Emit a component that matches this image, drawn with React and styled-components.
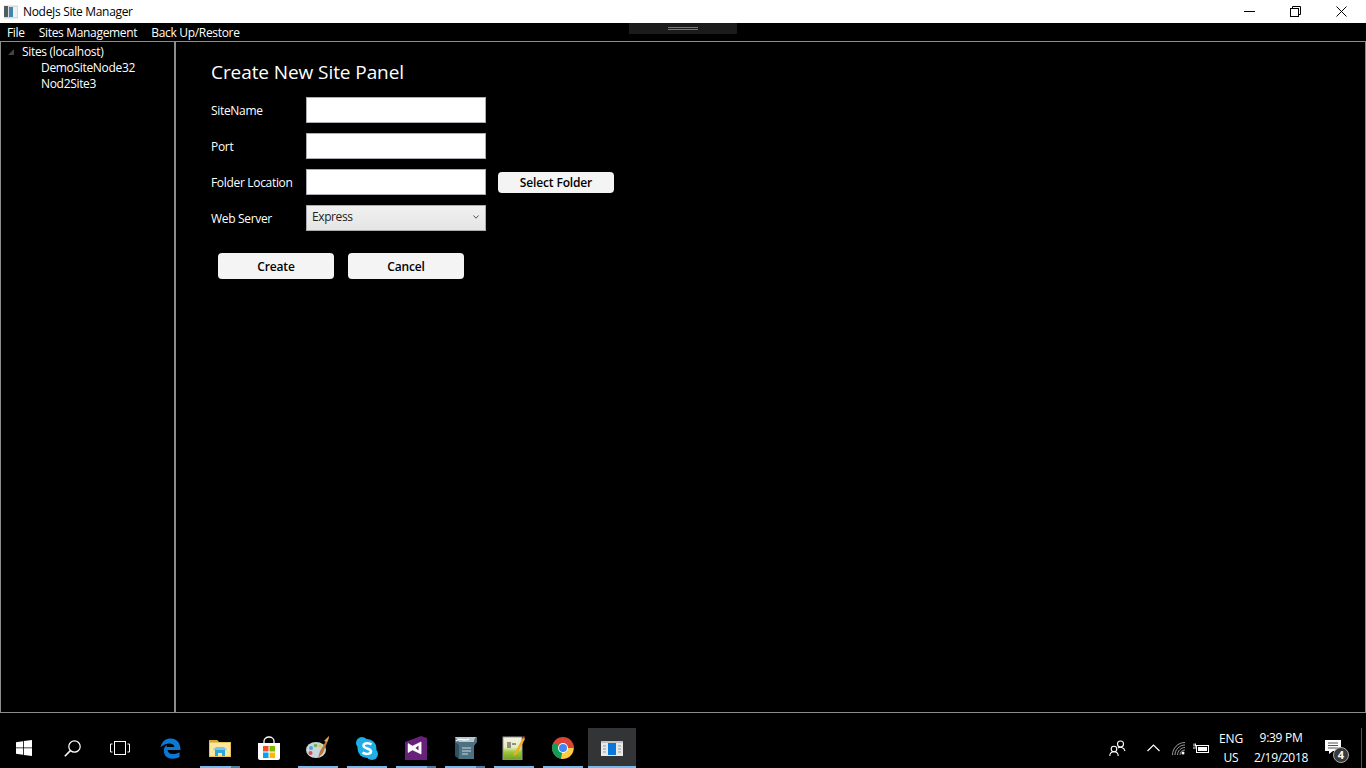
import React from "react";
import styled, { createGlobalStyle } from "styled-components";

const Global = createGlobalStyle`
  html, body { margin: 0; padding: 0; background: #000; }
  body { font-family: "Open Sans", "Noto Sans", sans-serif; font-size: 12px; letter-spacing: -0.32px; }
  * { box-sizing: border-box; }
`;

const Screen = styled.div`
  position: relative; width: 1366px; height: 768px; display: flex; flex-direction: column; background: #000; overflow: hidden;
`;
const TitleBar = styled.div`
  height: 23px; background: #fff; display: flex; align-items: center; color: #000; padding-left: 4px; flex: none;
`;
const TitleText = styled.span`margin-left: 5px; line-height: 23px;`;
const WindowButtons = styled.div`margin-left: auto; margin-right: 2px; display: flex; height: 23px;`;
const WindowButton = styled.div`
  width: 46px; height: 23px; display: flex; align-items: center; justify-content: center;
`;
const MenuBar = styled.div`height: 18px; display: flex; color: #fff; flex: none; padding: 1px 0 0 7px; gap: 14px; line-height: 18px;`;
const MenuItem = styled.span``;
const Handle = styled.div`
  position: absolute; left: 629px; top: 23px; width: 108px; height: 11px; background: #1b1b1b;
  display: flex; flex-direction: column; justify-content: center; align-items: center; gap: 1px;
`;
const HandleLine = styled.i`display: block; width: 30px; height: 1px; background: #777;`;
const Frame = styled.div`
  height: 672px; border: 1px solid #8c8c8c; display: flex; flex: none;
`;
const Sidebar = styled.aside`
  width: 175px; border-right: 2px solid #8c8c8c; color: #fff; padding-top: 2px; flex: none; line-height: 16px;
`;
const TreeRoot = styled.div`display: flex; align-items: center; padding-left: 7px; gap: 8px;`;
const TreeChild = styled.div`padding-left: 40px;`;
const Main = styled.main`flex: 1; padding: 18px 0 0 35px; color: #fff;`;
const Heading = styled.h1`
  margin: 0 0 12px; font-size: 19px; font-weight: 400; line-height: 25px; letter-spacing: -0.08px; color: #fff;
`;
const Form = styled.div`display: flex; flex-direction: column; gap: 10px;`;
const Row = styled.div`display: flex; align-items: center; height: 26px;`;
const Label = styled.label`width: 95px; flex: none;`;
const Input = styled.div`width: 180px; height: 26px; background: #fff; border: 1px solid #abadb3;`;
const Select = styled.div`
  width: 180px; height: 26px; border: 1px solid #acacac; background: linear-gradient(#f0f0f0, #e5e5e5);
  display: flex; align-items: center; justify-content: space-between; padding: 0 6px 3px 5px; color: #222; letter-spacing: -0.4px;
`;
const Button = styled.div`
  width: 116px; background: #f4f4f4; border-radius: 4px; color: #000; font-weight: 600; letter-spacing: -0.15px;
  display: flex; align-items: center; justify-content: center;
  height: ${p => p.$h || 26}px;
`;
const SideButton = styled(Button)`margin-left: 12px; margin-top: 1px;`;
const Actions = styled.div`display: flex; gap: 14px; margin: 22px 0 0 7px;`;

const Gap = styled.div`height: 15px; flex: none;`;
const Taskbar = styled.div`height: 40px; display: flex; color: #fff; flex: none;`;
const TaskButton = styled.div`
  position: relative; width: ${p => p.$w || 49}px; height: 40px; flex: none;
  display: flex; align-items: center; justify-content: center;
  margin-left: ${p => p.$ml || 0}px;
  background: ${p => (p.$active ? "#333436" : "transparent")};
`;
const Underline = styled.i`
  position: absolute; bottom: 0; left: ${p => p.$full ? 0 : 5}px; right: ${p => p.$full ? 0 : 4}px; height: 2px; background: #76b9ed;
`;
const UnderlineSplit = styled.i`
  position: absolute; bottom: 0; right: 4px; width: 9px; height: 2px; background: #4f7d9f;
`;
const Tray = styled.div`margin-left: auto; display: flex; height: 40px;`;
const TrayItem = styled.div`
  width: ${p => p.$w}px; display: flex; align-items: center; justify-content: center; flex-direction: column;
  line-height: ${p => p.$lh || 19}px; letter-spacing: ${p => p.$ls || -0.1}px; text-align: center;
`;
const Desktop = styled.div`width: 5px; border-left: 1px solid #555;`;
const NotifWrap = styled.div`position: relative; width: 26px; height: 22px; padding-top: 3px;
  svg { display: block; }
`;
const Badge = styled.span`
  position: absolute; right: 2px; bottom: -4px; width: 16px; height: 16px; border-radius: 50%;
  background: #3a3a3a; border: 1px solid #aaa; color: #fff; font-size: 11px; font-weight: 700; line-height: 14px; text-align: center; letter-spacing: 0;
`;

const AppIcon = ({ s = 15 }) => (
  <svg width={22} height={s} viewBox="0 0 22 15"><rect width="22" height="15" fill="#e9e9e9" /><rect width="22" height="2" fill="#c4c4c4" /><rect x="7" y="2" width="8" height="12" fill="#0a78d7" /><path d="M2 5h3M2 8h3M2 11h3M17 5h3M17 8h3M17 11h3" stroke="#999" /></svg>
);
const TitleIcon = () => (
  <svg width="14" height="14" viewBox="0 0 14 14"><rect width="14" height="13" y="0.5" fill="#d5dadd" /><rect x="0" y="1" width="4" height="11" fill="#4f5d63" /><rect x="5" y="2" width="4" height="10" fill="#3f86a8" /><rect x="9" y="2" width="4" height="10" fill="#eef1f3" /></svg>
);
const WinLogo = () => (
  <svg width="16" height="16" viewBox="0 0 16 16" fill="#fff"><path d="M0 2.3 7 1.2V7.5H0zM7.8 1.1 16 0V7.5H7.8zM0 8.3H7v6.4L0 13.7zM7.8 8.3H16V16L7.8 14.9z" /></svg>
);
const Search = () => (
  <svg width="17" height="17" viewBox="0 0 17 17" fill="none" stroke="#fff" strokeWidth="1.2"><circle cx="10.5" cy="6.5" r="5.7" /><path d="M6.4 10.6 .8 16.3" strokeWidth="1.5" /></svg>
);
const TaskView = () => (
  <svg width="20" height="14" viewBox="0 0 20 14" fill="none" stroke="#fff" strokeWidth="1"><rect x="4.5" y="0.5" width="11" height="13" /><path d="M2.5 3H.5v8h2M17.5 3h2v8h-2" /></svg>
);
const Edge = () => (
  <svg width="21" height="21" viewBox="0 0 22 22"><path d="M.5 9.500C2 3 6.500.5 11 .5c6.500 0 10.500 4.500 10.500 12H8c.3 5 7.500 5.500 12.500 2.500v5c-6 3-16 2.500-16.500-6C3.800 11 5 8.500 7.500 7c-.5 1.500-.6 2-.6 2.500H15c.2-4-7-6-14.500 0z" fill="#0a78d7" /></svg>
);
const Folder = () => (
  <svg width="22" height="18" viewBox="0 0 22 18"><path d="M0 1h8l2 2h12v15H0z" fill="#e6c35a" /><path d="M0 1h8l1 2H0z" fill="#d9a92e" /><rect x="1" y="4" width="20" height="13" fill="#fbe6a0" /><path d="M6 11h10v6h-3v-3H9v3H6z" fill="#2ea6dd" /><path d="M4 11h14l-3-3H7z" fill="#6fc6ee" /></svg>
);
const Store = () => (
  <svg width="24" height="24" viewBox="0 0 24 24"><path d="M7 8V5a5 4 0 0 1 10 0v3" fill="none" stroke="#fff" strokeWidth="1.3" /><path d="M1 7h22v15a2 2 0 0 1-2 2H3a2 2 0 0 1-2-2z" fill="#fff" /><rect x="6" y="10" width="5.500" height="5.500" fill="#f25022" /><rect x="12.500" y="10" width="5.500" height="5.500" fill="#7fba00" /><rect x="6" y="16.500" width="5.500" height="5.500" fill="#00a4ef" /><rect x="12.500" y="16.500" width="5.500" height="5.500" fill="#ffb900" /></svg>
);
const Palette = () => (
  <svg width="24" height="24" viewBox="0 0 24 24"><ellipse cx="10" cy="14" rx="10" ry="8" fill="#c9d6de" /><circle cx="5" cy="12" r="2" fill="#5aa0d8" /><circle cx="4.500" cy="17" r="2" fill="#d85050" /><circle cx="9.500" cy="9.500" r="1.800" fill="#63b85a" /><circle cx="14" cy="10" r="1.800" fill="#e8c84a" /><path d="M23 0 14 15l-2 7 5-5 6-15z" fill="#b87a3a" /><path d="M23 0l-2 6-3-1z" fill="#e0b060" /></svg>
);
const Skype = () => (
  <svg width="22" height="23" viewBox="0 0 22 23"><circle cx="6" cy="6" r="6" fill="#1eaee8" /><circle cx="16" cy="17" r="6" fill="#1eaee8" /><circle cx="11" cy="11.500" r="9.500" fill="#1eaee8" /><path d="M15.500 7.500C14 6 8 5.500 7.500 8.500c-.4 3.500 7.500 2.500 7.500 6 0 3-6 3-8.500 1" fill="none" stroke="#fff" strokeWidth="2.500" /></svg>
);
const VS = () => (
  <svg width="22" height="24" viewBox="0 0 22 24"><path d="M0 6 16 0l6 2v22H0z" fill="#68217a" /><path d="M3 7.500 8 12 3 16.500zM16 6v12L8 12zM3 7.500 7.500 10l8.500-4v12l-8.500-4L3 16.500" fill="#fff" stroke="#fff" strokeWidth=".5" /><path d="M13.500 9.500V14.500L10.500 12z" fill="#68217a" /></svg>
);
const Scroll = () => (
  <svg width="24" height="24" viewBox="0 0 24 24"><path d="M2 1h22v5l-3 4v13H6l-4-4z" fill="#4e7182" /><path d="M2 1h21c-2 2-2 4-2 5H6z" fill="#b7c7cf" /><path d="M3 5c5-4 8 1 13-2" fill="none" stroke="#fff" strokeWidth="1.200" /><path d="M9 12h9M9 15h9M9 18h6" stroke="#9fb7c3" strokeWidth="1.500" /><path d="M2 6v14l4 3V9z" fill="#2f5060" /></svg>
);
const Notepad = () => (
  <svg width="23" height="24" viewBox="0 0 23 24"><defs><linearGradient id="npg" x1="0" y1="0" x2="0" y2="1"><stop offset="0" stopColor="#f3f3e4" /><stop offset=".45" stopColor="#e6ecc0" /><stop offset=".65" stopColor="#9cc83a" /><stop offset="1" stopColor="#6f9c20" /></linearGradient></defs><rect x="1" y="1" width="19" height="23" fill="url(#npg)" stroke="#999" /><path d="M6 6v6M8 6v6M10 8h4" stroke="#333" strokeWidth="1" /><path d="M22 0 13 16l-2 4 4-2 8-15z" fill="#f0b020" /><path d="M22 0l1 3-2-1z" fill="#c03020" /></svg>
);
const Chrome = () => (
  <svg width="22" height="22" viewBox="0 0 22 22"><circle cx="11" cy="11" r="11" fill="#db4437" /><path d="M11 11 1.500 5.500A11 11 0 0 0 11 22l5.500-11z" fill="#0f9d58" /><path d="M11 11h10.500A11 11 0 0 1 9 21.800z" fill="#ffcd40" /><circle cx="11" cy="11" r="5" fill="#fff" /><circle cx="11" cy="11" r="4" fill="#4285f4" /></svg>
);
const People = () => (
  <svg width="17" height="17" viewBox="0 0 17 17" fill="none" stroke="#fff" strokeWidth="1.100"><circle cx="5" cy="9" r="2.800" /><path d="M.8 16c0-3 2-4.300 4.200-4.300S9.200 13 9.200 16" /><circle cx="11.500" cy="4" r="3" /><path d="M9 8c1.500-1.200 6-1 7 3" /></svg>
);
const Chevron = () => (
  <svg width="13" height="8" viewBox="0 0 13 8" fill="none" stroke="#fff" strokeWidth="1.200"><path d="M.5 7 6.500 1l6 6" /></svg>
);
const Wifi = () => (
  <svg width="13" height="13" viewBox="0 0 13 13" fill="none" stroke="#9a9a9a"><path d="M.5 13C.5 6 6 .5 13 .5M3 13c0-5.500 4.500-10 10-10M5.500 13c0-4 3.500-7.500 7.500-7.500M8 13c0-3 2-5 5-5" /><circle cx="11" cy="11" r="1.500" fill="#fff" stroke="none" /></svg>
);
const Battery = () => (
  <svg width="16" height="11" viewBox="0 0 16 11" fill="none" stroke="#fff"><rect x="3.500" y="2.500" width="12" height="7" /><rect x="5" y="4" width="9" height="4" fill="#fff" stroke="none" /><path d="M0 5h3M1 .5v3M2.500.5v3" /></svg>
);
const Notification = () => (
  <svg width="16" height="14" viewBox="0 0 16 14"><path d="M0 0h16v11H8l-4 3v-3H0z" fill="#fff" /><path d="M3 3h10M3 5.500h10M3 8h10" stroke="#555" /></svg>
);

const icons = [
  [<Edge />, 0], [<Folder />, 2], [<Store />, 0], [<Palette />, 1], [<Skype />, 1],
  [<VS />, 2], [<Scroll />, 2], [<Notepad />, 1], [<Chrome />, 1],
];

export default function App() {
  return (
    <Screen>
      <Global />
      <TitleBar>
        <TitleIcon />
        <TitleText>NodeJs Site Manager</TitleText>
        <WindowButtons>
          <WindowButton>
            <svg width="11" height="1" viewBox="0 0 11 1"><rect width="11" height="1" fill="#000" /></svg>
          </WindowButton>
          <WindowButton>
            <svg width="11" height="11" viewBox="0 0 11 11" fill="none" stroke="#000"><rect x=".5" y="2.500" width="8" height="8" /><path d="M2.500 2.500v-2h8v8h-2" /></svg>
          </WindowButton>
          <WindowButton>
            <svg width="11" height="11" viewBox="0 0 11 11" fill="none" stroke="#000"><path d="M.5.5l10 10M10.500.5l-10 10" /></svg>
          </WindowButton>
        </WindowButtons>
      </TitleBar>
      <MenuBar>
        <MenuItem>File</MenuItem>
        <MenuItem>Sites Management</MenuItem>
        <MenuItem>Back Up/Restore</MenuItem>
      </MenuBar>
      <Handle><HandleLine /><HandleLine /></Handle>
      <Frame>
        <Sidebar>
          <TreeRoot>
            <svg width="6" height="6" viewBox="0 0 6 6"><path d="M6 0v6H0z" fill="#444" /></svg>
            <span>Sites (localhost)</span>
          </TreeRoot>
          <TreeChild>DemoSiteNode32</TreeChild>
          <TreeChild>Nod2Site3</TreeChild>
        </Sidebar>
        <Main>
          <Heading>Create New Site Panel</Heading>
          <Form>
            <Row><Label>SiteName</Label><Input /></Row>
            <Row><Label>Port</Label><Input /></Row>
            <Row>
              <Label>Folder Location</Label><Input />
              <SideButton $h={21}>Select Folder</SideButton>
            </Row>
            <Row>
              <Label>Web Server</Label>
              <Select>
                <span>Express</span>
                <svg width="6" height="4" viewBox="0 0 6 4" fill="none" stroke="#555"><path d="M.5.5 3 3.200 5.500.5" /></svg>
              </Select>
            </Row>
          </Form>
          <Actions>
            <Button>Create</Button>
            <Button>Cancel</Button>
          </Actions>
        </Main>
      </Frame>
      <Gap />
      <Taskbar>
        <TaskButton $w={48}><WinLogo /></TaskButton>
        <TaskButton $w={48}><Search /></TaskButton>
        <TaskButton $w={48}><TaskView /></TaskButton>
        {icons.map(([icon, kind], i) => (
          <TaskButton key={i} $ml={i === 0 ? 2 : 0}>
            {icon}
            {kind > 0 && <Underline />}
            {kind === 2 && <UnderlineSplit />}
          </TaskButton>
        ))}
        <TaskButton $w={48} $ml={1} $active><AppIcon /><Underline $full /></TaskButton>
        <Tray>
          <TrayItem $w={39}><People /></TrayItem>
          <TrayItem $w={32}><Chevron /></TrayItem>
          <TrayItem $w={18}><Wifi /></TrayItem>
          <TrayItem $w={28}><Battery /></TrayItem>
          <TrayItem $w={32}><span>ENG</span><span>US</span></TrayItem>
          <TrayItem $w={68} $lh={20} $ls={-0.3}><span>9:39 PM</span><span>2/19/2018</span></TrayItem>
          <TrayItem $w={46}><NotifWrap><Notification /><Badge>4</Badge></NotifWrap></TrayItem>
          <Desktop />
        </Tray>
      </Taskbar>
    </Screen>
  );
}
